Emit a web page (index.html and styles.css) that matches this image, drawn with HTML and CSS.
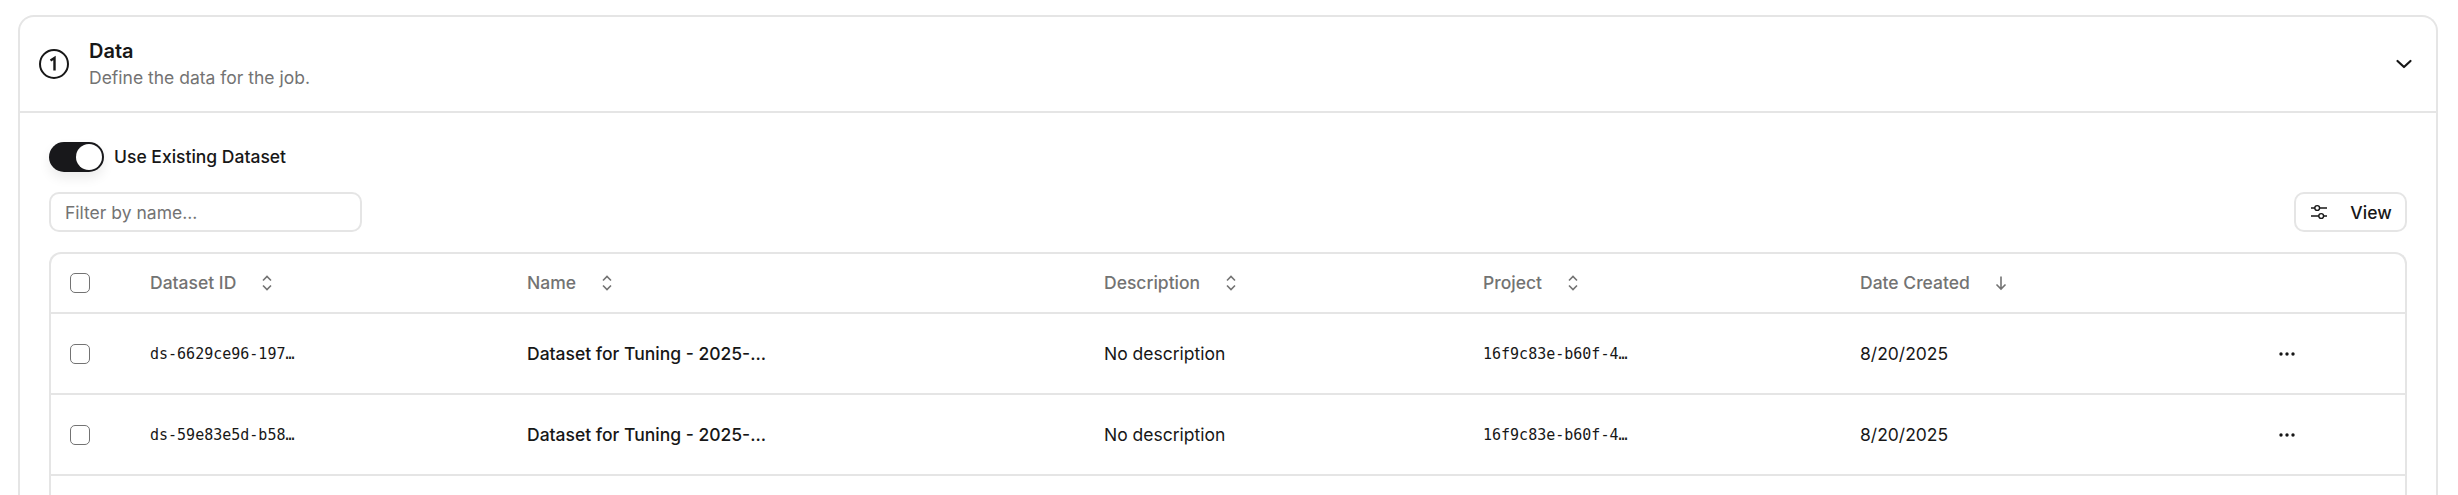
FILE: index.html
```html
<!DOCTYPE html>
<html lang="en">
<head>
    <meta charset="UTF-8">
    <title>Data</title>
    <link rel="stylesheet" href="styles.css">
</head>
<body>
    <div class="card">
        <div class="card-header">
            <div class="step-title">
                <svg class="step-icon" width="32" height="32" viewBox="0 0 32 32" fill="none" stroke="#171717" stroke-width="2">
                    <circle cx="16" cy="16" r="14"/>
                    <path d="M12.5 12.5 L16.5 10 V22.5" stroke-width="2.4"/>
                </svg>
                <div>
                    <div class="title">Data</div>
                    <div class="subtitle">Define the data for the job.</div>
                </div>
            </div>
            <svg width="24" height="24" viewBox="0 0 24 24" fill="none" stroke="#171717" stroke-width="2.2" stroke-linecap="round" stroke-linejoin="round">
                <path d="M5.5 9 L12 15 L18.5 9"/>
            </svg>
        </div>
        <div class="card-body">
            <div class="toggle-row">
                <div class="toggle"><div class="toggle-knob"></div></div>
                <span class="toggle-label">Use Existing Dataset</span>
            </div>
            <div class="toolbar">
                <div class="filter-input">Filter by name...</div>
                <button class="view-btn">
                    <svg width="20" height="20" viewBox="0 0 20 20" fill="none" stroke="#171717" stroke-width="1.4">
                        <path d="M2 6 H6 M10.5 6 H18 M2 14 H10 M14.5 14 H18"/>
                        <circle cx="8.2" cy="6" r="2.4"/>
                        <circle cx="12.2" cy="14" r="2.4"/>
                    </svg>
                    <span>View</span>
                </button>
            </div>
            <div class="table-wrap">
                <table class="data-table">
                    <thead>
                        <tr>
                            <th class="col-check"><span class="checkbox"></span></th>
                            <th class="col-id"><span class="th-label">Dataset ID<svg class="sort-icon" width="16" height="20" viewBox="0 0 16 20"><path d="M4 7.5 L8 3.5 L12 7.5 M4 12.5 L8 16.5 L12 12.5"/></svg></span></th>
                            <th class="col-name"><span class="th-label">Name<svg class="sort-icon" width="16" height="20" viewBox="0 0 16 20"><path d="M4 7.5 L8 3.5 L12 7.5 M4 12.5 L8 16.5 L12 12.5"/></svg></span></th>
                            <th class="col-desc"><span class="th-label">Description<svg class="sort-icon" width="16" height="20" viewBox="0 0 16 20"><path d="M4 7.5 L8 3.5 L12 7.5 M4 12.5 L8 16.5 L12 12.5"/></svg></span></th>
                            <th class="col-project"><span class="th-label">Project<svg class="sort-icon" width="16" height="20" viewBox="0 0 16 20"><path d="M4 7.5 L8 3.5 L12 7.5 M4 12.5 L8 16.5 L12 12.5"/></svg></span></th>
                            <th class="col-date"><span class="th-label">Date Created<svg class="sort-icon" width="16" height="20" viewBox="0 0 16 20"><path d="M8 3.5 V16 M3.5 11.5 L8 16 L12.5 11.5"/></svg></span></th>
                            <th></th>
                        </tr>
                    </thead>
                    <tbody>
                        <tr>
                            <td><span class="checkbox"></span></td>
                            <td class="mono">ds-6629ce96-197…</td>
                            <td class="name">Dataset for Tuning - 2025-...</td>
                            <td>No description</td>
                            <td class="mono">16f9c83e-b60f-4…</td>
                            <td>8/20/2025</td>
                            <td class="actions"><svg width="16" height="6" viewBox="0 0 16 6" fill="#171717"><circle cx="2" cy="3" r="1.7"/><circle cx="8" cy="3" r="1.7"/><circle cx="14" cy="3" r="1.7"/></svg></td>
                        </tr>
                        <tr>
                            <td><span class="checkbox"></span></td>
                            <td class="mono">ds-59e83e5d-b58…</td>
                            <td class="name">Dataset for Tuning - 2025-...</td>
                            <td>No description</td>
                            <td class="mono">16f9c83e-b60f-4…</td>
                            <td>8/20/2025</td>
                            <td class="actions"><svg width="16" height="6" viewBox="0 0 16 6" fill="#171717"><circle cx="2" cy="3" r="1.7"/><circle cx="8" cy="3" r="1.7"/><circle cx="14" cy="3" r="1.7"/></svg></td>
                        </tr>
                    </tbody>
                </table>
            </div>
        </div>
    </div>
</body>
</html>
```

FILE: styles.css
```css
html, body {
    height: 495px;
    overflow: hidden;
}
body {
    margin: 0;
    padding: 15px 20px 0 18px;
    background-color: #fff;
    color: #171717;
    font-family: Inter, "Liberation Sans", sans-serif;
    font-size: 17.5px;
}
.card {
    border: 2px solid #e5e5e5;
    border-bottom: none;
    border-radius: 16px 16px 0 0;
    height: 600px;
}
.card-header {
    display: flex;
    justify-content: space-between;
    align-items: center;
    height: 94px;
    padding: 0 20px 0 18px;
    border-bottom: 2px solid #e5e5e5;
}
.step-title {
    display: flex;
    align-items: center;
    gap: 19px;
}
.title {
    font-size: 20px;
    font-weight: 600;
    line-height: 28px;
}
.subtitle {
    color: #737373;
    line-height: 26px;
}
.card-body {
    padding: 29px 29px 0 29px;
}
.toggle-row {
    display: flex;
    align-items: center;
    gap: 10px;
    font-weight: 500;
    height: 30px;
}
.toggle-label {
    padding-bottom: 1px;
}
.toggle {
    display: flex;
    justify-content: flex-end;
    align-items: center;
    width: 55px;
    height: 30px;
    padding: 2px;
    box-sizing: border-box;
    border-radius: 15px;
    background-color: #18181b;
    box-shadow: 0 6px 12px rgba(0, 0, 0, 0.08);
}
.toggle-knob {
    width: 26px;
    height: 26px;
    border-radius: 50%;
    background-color: #fff;
}
.toolbar {
    display: flex;
    justify-content: space-between;
    margin-top: 20px;
}
.filter-input {
    display: flex;
    align-items: center;
    width: 313px;
    height: 40px;
    padding: 0 14px;
    box-sizing: border-box;
    border: 2px solid #e5e5e5;
    border-radius: 10px;
    color: #737373;
}
.view-btn {
    display: flex;
    align-items: center;
    justify-content: center;
    gap: 21px;
    width: 113px;
    height: 40px;
    padding: 0;
    border: 2px solid #e5e5e5;
    border-radius: 10px;
    background-color: #fff;
    color: #171717;
    font: inherit;
    font-weight: 500;
}
.table-wrap {
    margin-top: 20px;
    border: 2px solid #e5e5e5;
    border-bottom: none;
    border-radius: 12px 12px 0 0;
    height: 300px;
}
.data-table {
    width: 100%;
    border-collapse: collapse;
    table-layout: fixed;
}
.data-table th, .data-table td {
    padding: 0;
    text-align: left;
    border-bottom: 2px solid #e5e5e5;
}
.data-table th {
    height: 58px;
    color: #737373;
    font-weight: 500;
}
.data-table td {
    height: 79px;
}
.col-check {
    width: 99px;
}
.col-id {
    width: 377px;
}
.col-name {
    width: 577px;
}
.col-desc {
    width: 379px;
}
.col-project {
    width: 377px;
}
.col-date {
    width: 407px;
}
.th-label {
    display: flex;
    align-items: center;
    gap: 23px;
    padding-bottom: 1px;
}
.sort-icon {
    fill: none;
    stroke: #737373;
    stroke-width: 1.6;
}
.checkbox {
    display: block;
    width: 20px;
    height: 20px;
    margin-left: 19px;
    box-sizing: border-box;
    border: 1.5px solid #737373;
    border-radius: 5px;
}
.mono {
    font-family: "DejaVu Sans Mono", "Liberation Mono", monospace;
    font-size: 15px;
}
.name {
    font-weight: 500;
}
.actions svg {
    display: block;
    margin-left: 12px;
}
```
